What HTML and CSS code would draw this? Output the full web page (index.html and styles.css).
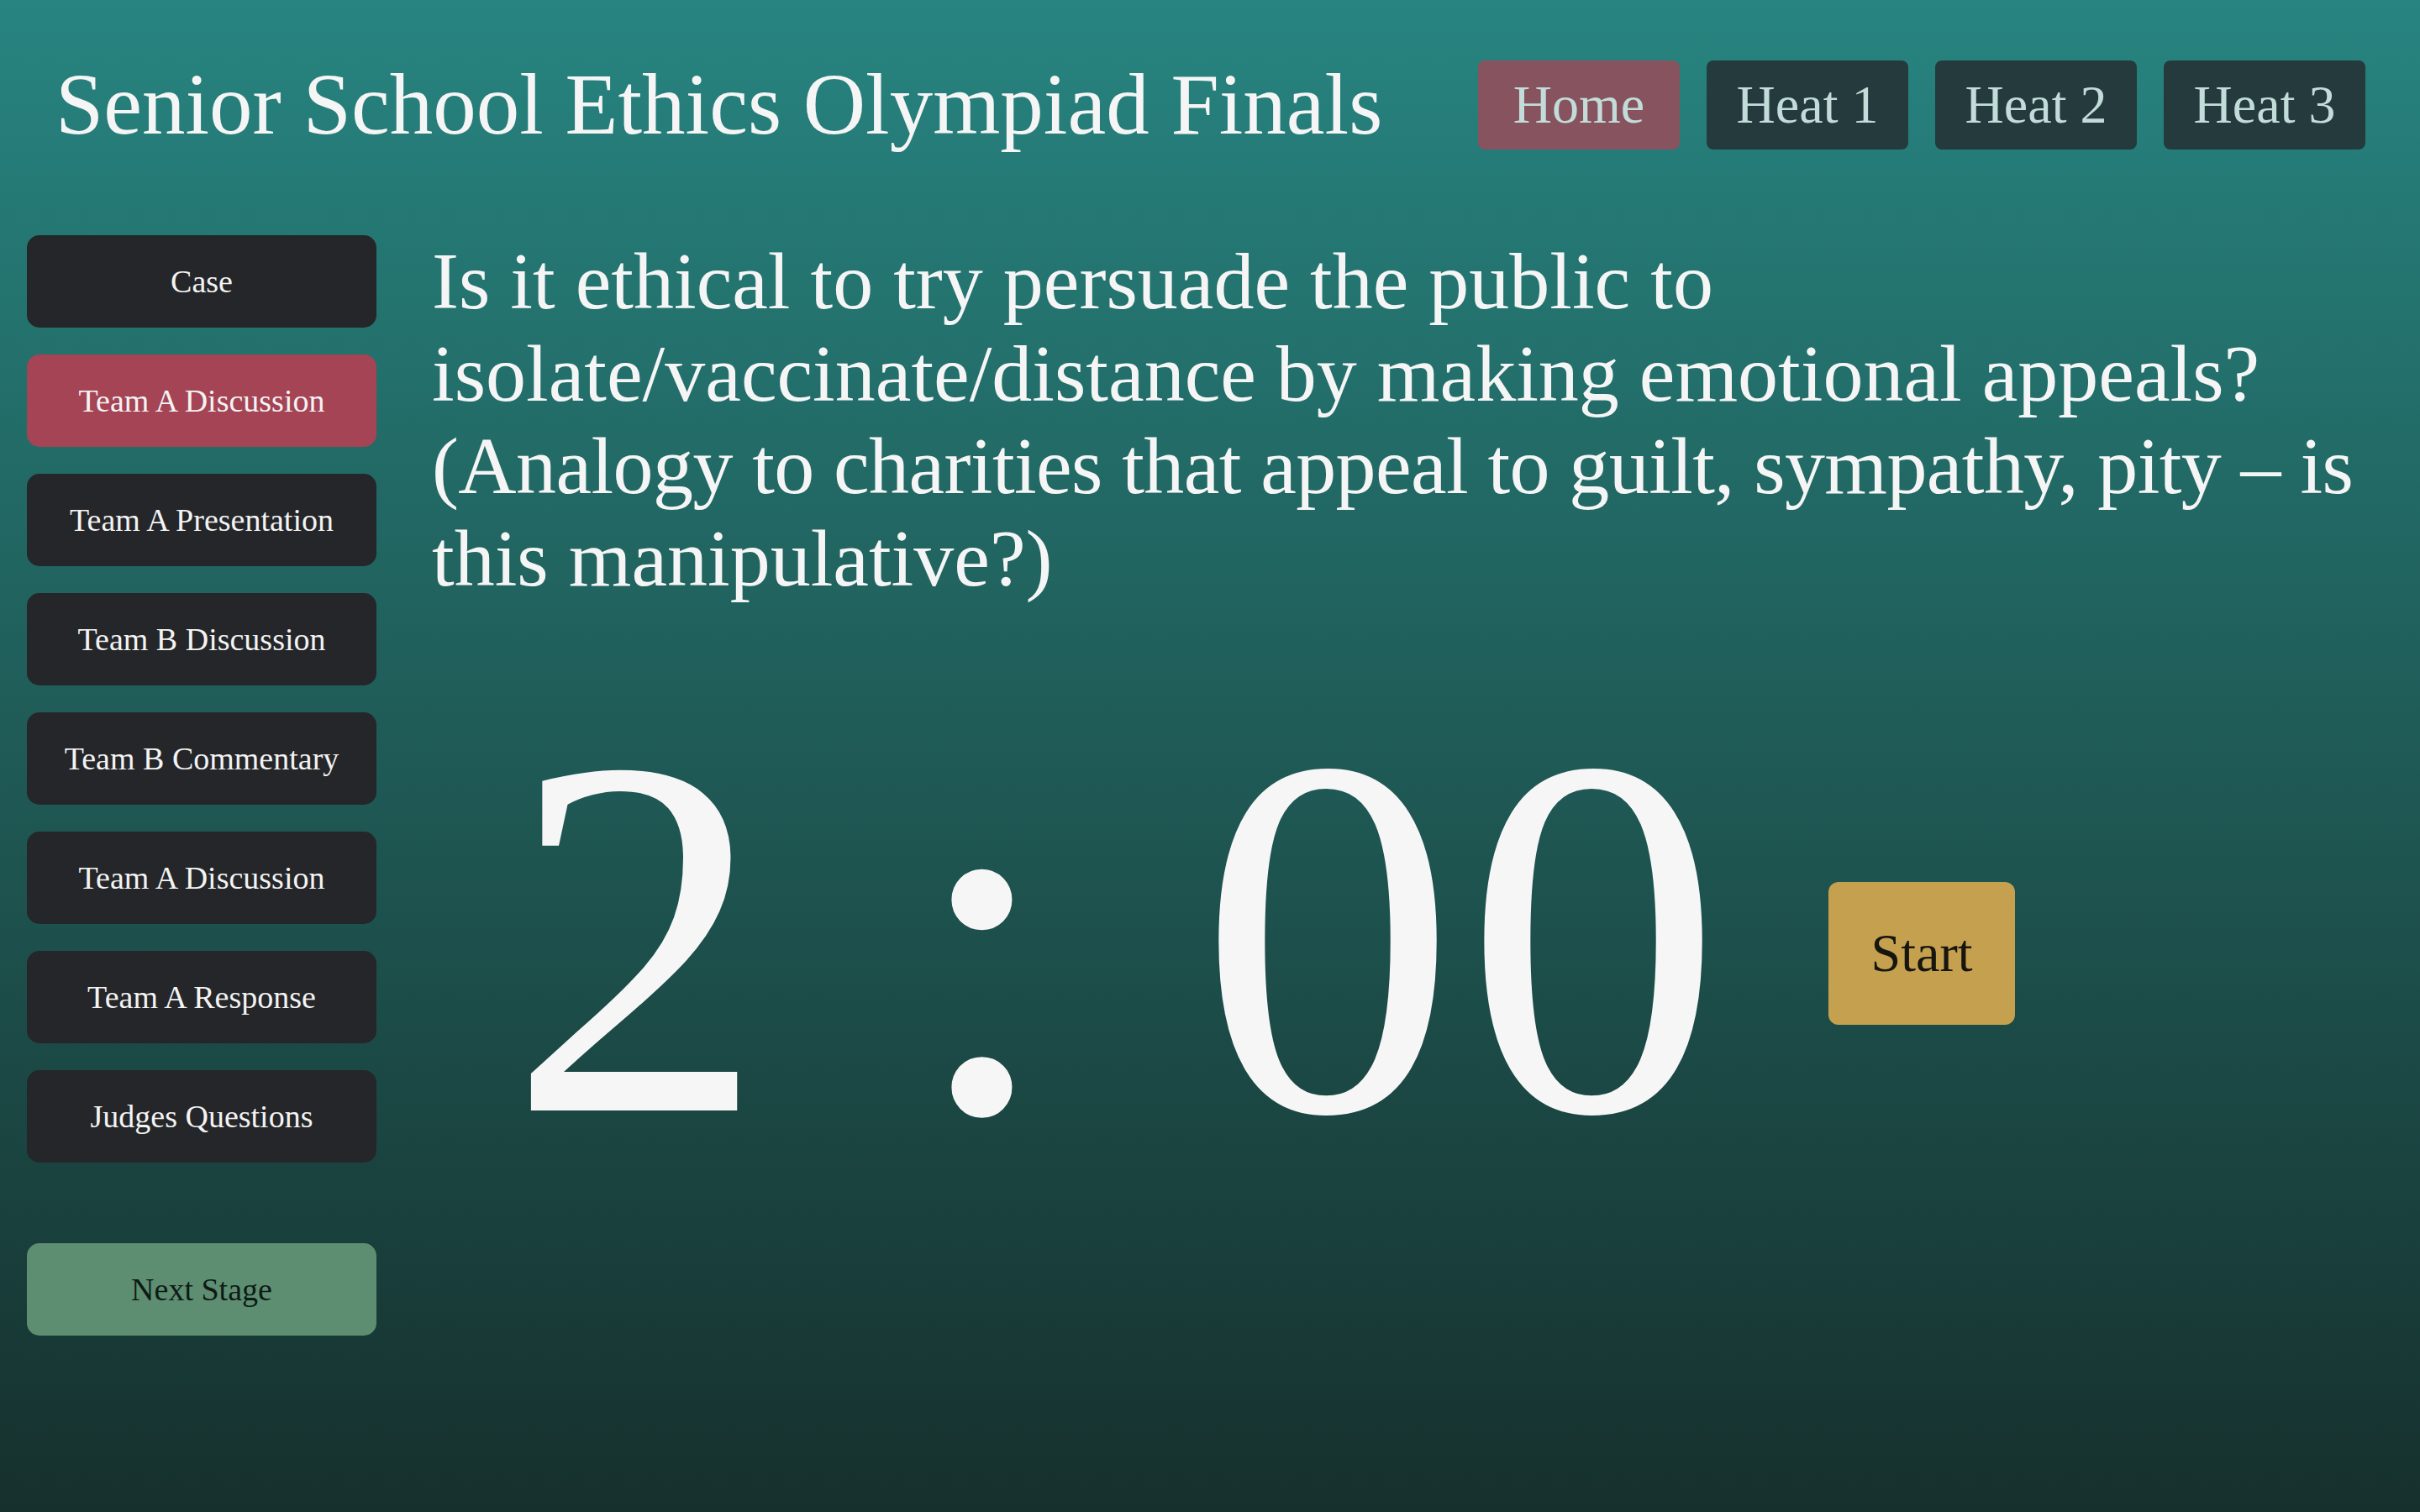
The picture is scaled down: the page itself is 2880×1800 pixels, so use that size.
FILE: index.html
```html
<!DOCTYPE html>
<html lang="en">
<head>
<meta charset="utf-8">
<title>Senior School Ethics Olympiad Finals</title>
<link rel="stylesheet" href="styles.css">
</head>
<body>
<header class="top">
  <h1 class="title">Senior School Ethics Olympiad Finals</h1>
  <nav class="nav">
    <a class="nav-btn nav-home" href="#">Home</a>
    <a class="nav-btn" href="#">Heat 1</a>
    <a class="nav-btn" href="#">Heat 2</a>
    <a class="nav-btn" href="#">Heat 3</a>
  </nav>
</header>
<div class="layout">
  <aside class="stages">
    <button class="stage">Case</button>
    <button class="stage stage-active">Team A Discussion</button>
    <button class="stage">Team A Presentation</button>
    <button class="stage">Team B Discussion</button>
    <button class="stage">Team B Commentary</button>
    <button class="stage">Team A Discussion</button>
    <button class="stage">Team A Response</button>
    <button class="stage">Judges Questions</button>
    <button class="stage stage-next">Next Stage</button>
  </aside>
  <main class="main">
    <p class="question">Is it ethical to try persuade the public to<br>isolate/vaccinate/distance by making emotional appeals?<br><span class="tight">(Analogy to charities that appeal to guilt, sympathy, pity – is</span><br>this manipulative?)</p>
    <div class="timer-row">
      <div class="timer">2 : 00</div>
      <button class="start">Start</button>
    </div>
  </main>
</div>
</body>
</html>
```

FILE: styles.css
```css
html, body {
  margin: 0;
  padding: 0;
}

body {
  width: 2880px;
  height: 1800px;
  overflow: hidden;
  background: linear-gradient(to bottom, #278480 0%, #1f5a56 50%, #16302d 100%);
  font-family: "Liberation Serif", "DejaVu Serif", serif;
  color: #f5f5f5;
}

.top {
  display: flex;
  justify-content: space-between;
  align-items: center;
  padding: 72px 65px 0 66px;
  height: 106px;
}

.title {
  margin: 0;
  font-weight: normal;
  font-size: 103px;
  line-height: 1.1;
  color: #f5f5f5;
  white-space: nowrap;
}

.nav {
  display: flex;
  gap: 32px;
}

.nav-btn {
  display: flex;
  align-items: center;
  justify-content: center;
  width: 240px;
  height: 106px;
  border-radius: 8px;
  background: #253a3c;
  color: #c2dcd9;
  font-size: 64px;
  text-decoration: none;
}

.nav-home {
  background: #87535e;
}

.layout {
  display: flex;
  margin-top: 102px;
}

.stages {
  display: flex;
  flex-direction: column;
  gap: 32px;
  width: 416px;
  margin-left: 32px;
  flex-shrink: 0;
}

.stage {
  height: 110px;
  border: none;
  border-radius: 15px;
  background: #252629;
  color: #f3f3f3;
  font-family: "Liberation Serif", "DejaVu Serif", serif;
  font-size: 38px;
  padding: 0;
}

.stage-active {
  background: #a54455;
}

.stage-next {
  margin-top: 64px;
  background: #5d8e72;
  color: #0f1a15;
}

.main {
  margin-left: 66px;
  flex: 1;
}

.question {
  margin: 0;
  font-size: 96px;
  line-height: 110px;
  white-space: nowrap;
  color: #f5f5f5;
}

.tight {
  letter-spacing: -0.6px;
}

.timer-row {
  display: flex;
  align-items: center;
  margin-top: 76px;
  padding-left: 91px;
}

.timer {
  font-size: 612px;
  line-height: 640px;
  letter-spacing: 10px;
  white-space: pre;
  color: #f6f6f6;
}

.start {
  margin-left: 117px;
  margin-top: 38px;
  width: 222px;
  height: 170px;
  border: none;
  border-radius: 12px;
  background: #c5a04e;
  color: #16160f;
  font-family: "Liberation Serif", "DejaVu Serif", serif;
  font-size: 64px;
  padding: 0;
}
```
